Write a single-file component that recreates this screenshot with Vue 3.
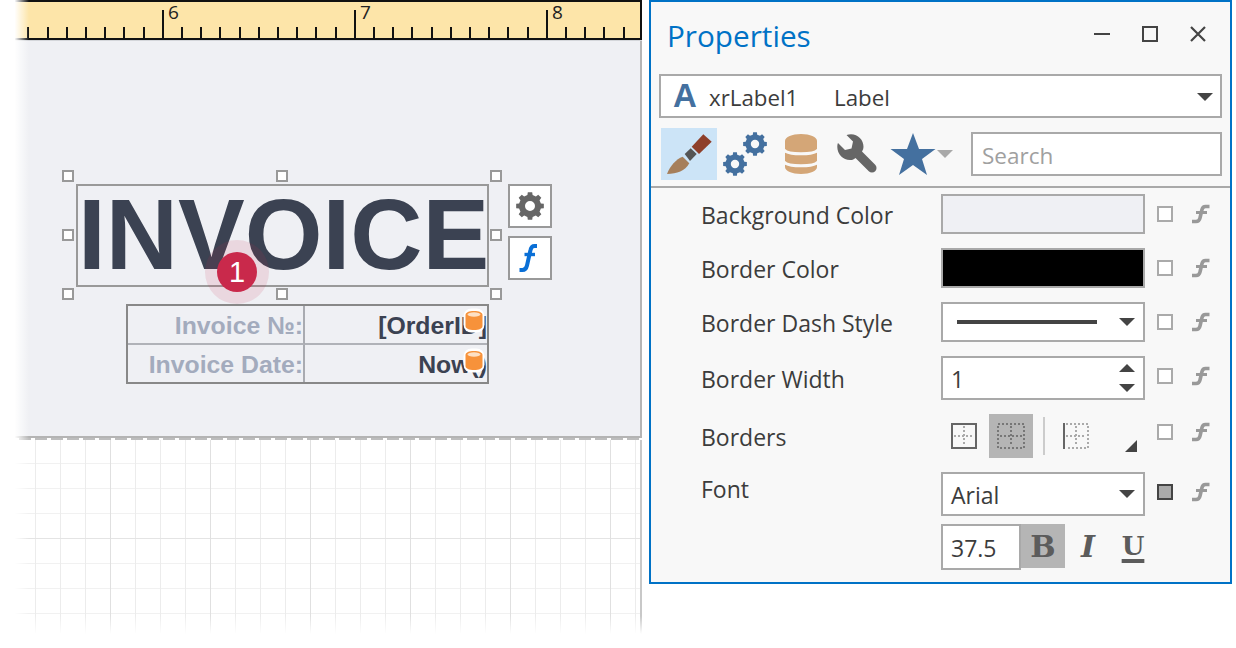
<script setup>
// toothed wheel as a path, hole cut with evenodd
function gear(cx, cy, r, hole, teeth = 8) {
  const step = (Math.PI * 2) / teeth
  const ri = r * 0.8
  const pts = []
  const at = (a, rad) => `${(cx + Math.cos(a) * rad).toFixed(2)} ${(cy + Math.sin(a) * rad).toFixed(2)}`
  for (let i = 0; i < teeth; i++) {
    const a = i * step - Math.PI / 2
    pts.push(at(a - step * 0.3, ri), at(a - step * 0.2, r), at(a + step * 0.2, r), at(a + step * 0.3, ri))
  }
  const circle = `M${cx - hole} ${cy}a${hole} ${hole} 0 1 0 ${hole * 2} 0a${hole} ${hole} 0 1 0 ${-hole * 2} 0Z`
  return `M${pts.join('L')}Z${circle}`
}

const bigGear = gear(14, 14, 14, 5)
const gearA = gear(32, 12, 12, 4.2)
const gearB = gear(12, 32, 12, 4.2)

const ticks = []
for (let i = 0; i * 19.2 + 28.4 < 640; i++) {
  const x = Math.round(28.4 + i * 19.2)
  ticks.push({ x, major: (i - 7) % 10 === 0 })
}
const rulerNums = [
  { n: 6, x: 168 },
  { n: 7, x: 360 },
  { n: 8, x: 552 },
]

const handles = [
  { x: 68, y: 176 }, { x: 282, y: 176 }, { x: 496, y: 176 },
  { x: 68, y: 235 }, { x: 496, y: 235 },
  { x: 68, y: 294 }, { x: 282, y: 294 }, { x: 496, y: 294 },
]

const rows = [
  { label: 'Background Color', kind: 'swatch', color: '#eff0f4' },
  { label: 'Border Color', kind: 'swatch', color: '#000' },
  { label: 'Border Dash Style', kind: 'dash' },
  { label: 'Border Width', kind: 'num' },
  { label: 'Borders', kind: 'borders' },
  { label: 'Font', kind: 'font' },
]
</script>

<template>
  <div class="page">
    <div class="designer">
      <div class="ruler">
        <svg width="642" height="40" class="ruler-svg">
          <rect
            v-for="t in ticks"
            :key="t.x"
            :x="t.x - 1"
            :y="t.major ? 10 : 27"
            width="2"
            :height="t.major ? 28 : 11"
            fill="#111"
          />
          <text v-for="r in rulerNums" :key="r.n" :x="r.x" y="19" class="ruler-num">{{ r.n }}</text>
        </svg>
      </div>

      <div class="surface">
        <div class="label-box">INVOICE</div>
        <div v-for="(h, i) in handles" :key="i" class="handle" :style="{ left: h.x - 6 + 'px', top: h.y - 46 + 'px' }"></div>

        <div class="side-btn gear-btn">
          <svg width="28" height="28" viewBox="0 0 28 28"><path :d="bigGear" fill="#666" fill-rule="evenodd" /></svg>
        </div>
        <div class="side-btn f-btn">
          <svg width="20" height="30" viewBox="0 0 20 30">
            <path d="M18 3H15.500C13 3 12 4.500 11.500 7L8 22.500C7.300 25.500 6 27 3.500 27H0.500" fill="none" stroke="#0a6fd6" stroke-width="4" />
            <path d="M5.500 11.500H16" fill="none" stroke="#0a6fd6" stroke-width="3.400" />
          </svg>
        </div>

        <div class="info-table">
          <div class="cell key">Invoice №:</div>
          <div class="cell val">[OrderID]</div>
          <div class="cell key">Invoice Date:</div>
          <div class="cell val">Now()</div>
          <svg v-for="t in [2, 42]" :key="t" class="pill" :style="{ top: t + 'px' }" width="22" height="25" viewBox="0 0 22 25">
            <rect x="0.500" y="0.500" width="21" height="24" rx="8" fill="#fff" />
            <path d="M2.500 7C2.500 4.500 6 3 11 3S19.500 4.500 19.500 7V18C19.500 20.500 16 22 11 22S2.500 20.500 2.500 18Z" fill="#f7923a" />
            <ellipse cx="11" cy="6.500" rx="6.500" ry="2.200" fill="#fde0c4" />
          </svg>
        </div>

        <div class="halo"></div>
        <div class="badge">1</div>
      </div>

      <div class="page-edge"></div>
      <div class="grid-area"></div>

      <div class="fade-left"></div>
      <div class="fade-bottom"></div>
    </div>

    <section class="panel">
      <header class="titlebar">
        <h1 class="title">Properties</h1>
        <div class="win-btns">
          <svg width="16" height="16" viewBox="0 0 16 16"><path d="M0 8H16" stroke="#444" stroke-width="2" /></svg>
          <svg width="16" height="16" viewBox="0 0 16 16"><rect x="1" y="1" width="14" height="14" fill="none" stroke="#444" stroke-width="2" /></svg>
          <svg width="16" height="16" viewBox="0 0 16 16"><path d="M1 1L15 15M15 1L1 15" stroke="#444" stroke-width="2.200" /></svg>
        </div>
      </header>

      <div class="combo">
        <span class="combo-a">A</span>
        <span class="combo-name">xrLabel1</span>
        <span class="combo-type">Label</span>
        <span class="arrow combo-arrow"></span>
      </div>

      <div class="tools">
        <div class="tool brush">
          <svg width="56" height="52" viewBox="0 0 56 52">
            <path d="M42.300 6.300L50.700 13.700L38 26L30.700 18.700Z" fill="#8e3f2a" />
            <path d="M29.700 20.300L35.700 26L29 33L23.700 26Z" fill="#555" />
            <path d="M21.700 28.700L28.300 35.300C24 43 16 46 6 46C9 38 15 31 21.700 28.700Z" fill="#a67f5b" />
          </svg>
        </div>
        <svg class="tool-gears" width="44" height="44" viewBox="0 0 44 44">
          <path :d="gearA" fill="#44709f" fill-rule="evenodd" />
          <path :d="gearB" fill="#44709f" fill-rule="evenodd" />
        </svg>
        <svg class="tool-db" width="32" height="40" viewBox="0 0 32 40">
          <path d="M0 7C0 3 7 0 16 0S32 3 32 7V33C32 37 25 40 16 40S0 37 0 33Z" fill="#d4a677" />
          <path d="M-1 16C3 21 29 21 33 16M-1 28C3 33 29 33 33 28" fill="none" stroke="#f8f8f8" stroke-width="3" />
        </svg>
        <svg class="tool-wrench" width="40" height="40" viewBox="0 0 40 40">
          <path d="M14 .3C21 .3 26.500 6 26.500 13C26.500 14.500 26 16 25 17.600L38.200 30.800A4.500 4.500 0 0 1 31.800 37.200L18.500 23.900C16.500 25.500 15 26 13 26C6 26 .3 20 .3 13C.3 11.500 .5 10 1 9L8 16L14.500 14.500L16 7.500L9.500 1C11 .5 12.500 .3 14 .3Z" fill="#666" />
        </svg>
        <svg class="tool-star" width="46" height="44" viewBox="0 0 46 44">
          <polygon points="23,1 29,17 45.500,17 32,27 37,43 23,33 9,43 14,27 .5,17 17,17" fill="#44709f" />
        </svg>
        <span class="arrow star-arrow"></span>
        <div class="search">Search</div>
      </div>

      <div class="sep"></div>

      <div class="rows">
        <div v-for="r in rows" :key="r.label" class="row" :class="r.kind">
          <div class="row-label">{{ r.label }}</div>

          <div v-if="r.kind === 'swatch'" class="editor" :style="{ background: r.color }"></div>

          <div v-else-if="r.kind === 'dash'" class="editor dash-ed">
            <span class="dash-line"></span>
            <span class="arrow"></span>
          </div>

          <div v-else-if="r.kind === 'num'" class="editor num-ed">
            <span class="ed-text">1</span>
            <span class="spin">
              <span class="arrow up"></span>
              <span class="arrow"></span>
            </span>
          </div>

          <div v-else-if="r.kind === 'borders'" class="border-tools">
            <svg width="26" height="26" viewBox="0 0 26 26" class="b-one">
              <rect x="1" y="1" width="24" height="24" fill="none" stroke="#666" stroke-width="2" />
              <path d="M13 3V23M3 13H23" stroke="#aaa" stroke-width="2" stroke-dasharray="2 2" />
            </svg>
            <div class="b-sel">
              <svg width="28" height="26" viewBox="0 0 28 26">
                <rect x="1" y="1" width="26" height="24" fill="none" stroke="#777" stroke-width="2" stroke-dasharray="2 2" />
                <path d="M14 3V23M3 13H25" stroke="#777" stroke-width="2" stroke-dasharray="2 2" />
              </svg>
            </div>
            <span class="b-div"></span>
            <svg width="26" height="26" viewBox="0 0 26 26" class="b-three">
              <path d="M1 0V26" stroke="#666" stroke-width="2" />
              <path d="M3 1H25V25H3M13 3V23M3 13H23" fill="none" stroke="#aaa" stroke-width="2" stroke-dasharray="2 2" />
            </svg>
            <svg width="12" height="12" viewBox="0 0 12 12" class="b-corner"><polygon points="12,0 12,12 0,12" fill="#444" /></svg>
          </div>

          <div v-else class="editor font-ed">
            <span class="ed-text">Arial</span>
            <span class="arrow"></span>
          </div>

          <div class="check" :class="{ dark: r.kind === 'font' }"></div>
          <svg class="fx" width="18" height="20" viewBox="0 0 18 20">
            <path d="M17.500 2.500H13.500C11.500 2.500 10.500 3.500 10 5.500L8 14C7.500 16.500 6.500 17.500 4 17.500H0" fill="none" stroke="#999" stroke-width="3.600" />
            <path d="M4 8.500H15" fill="none" stroke="#999" stroke-width="3" />
          </svg>
        </div>

        <div class="size-row">
          <div class="size-input">37.5</div>
          <div class="style-btn on">B</div>
          <div class="style-btn ital">I</div>
          <div class="style-btn under">U</div>
        </div>
      </div>
    </section>
  </div>
</template>

<style scoped>
.page {
  width: 1236px;
  height: 648px;
  display: flex;
  gap: 7px;
  overflow: hidden;
  background: #fff;
  font-family: "Open Sans", "Liberation Sans", sans-serif;
}

/* left: report designer */
.designer {
  position: relative;
  width: 642px;
  height: 648px;
  flex: none;
  display: flex;
  flex-direction: column;
}
.ruler {
  height: 40px;
  flex: none;
  box-sizing: border-box;
  background: #fde5a9;
  border-top: 2px solid #111;
  border-bottom: 2px solid #111;
  border-right: 2px solid #111;
  position: relative;
  z-index: 1;
  box-shadow: 0 1px 0 #d4d6da;
}
.ruler-svg {
  position: absolute;
  left: 0;
  top: -2px;
}
.ruler-num {
  font-family: "Open Sans", sans-serif;
  font-size: 19px;
  fill: #222;
}
.surface {
  position: relative;
  height: 396px;
  flex: none;
  box-sizing: border-box;
  background: #eff0f4;
  border-right: 2px solid #b5b5b5;
}
.label-box {
  position: absolute;
  left: 76px;
  top: 144px;
  width: 413px;
  height: 103px;
  box-sizing: border-box;
  border: 2px solid #999;
  font: bold 100px/97px "Liberation Sans", Arial, sans-serif;
  font-kerning: none;
  color: #3b4252;
  white-space: nowrap;
}
.handle {
  position: absolute;
  width: 12px;
  height: 12px;
  box-sizing: border-box;
  border: 2px solid #999;
  background: #fff;
}
.side-btn {
  position: absolute;
  left: 508px;
  width: 44px;
  height: 44px;
  box-sizing: border-box;
  border: 2px solid #999;
  background: #fff;
  display: flex;
  align-items: center;
  justify-content: center;
}
.gear-btn {
  top: 144px;
}
.f-btn {
  top: 196px;
  padding-right: 3px;
}
.info-table {
  position: absolute;
  left: 126px;
  top: 264px;
  width: 363px;
  height: 80px;
  box-sizing: border-box;
  border: 2px solid #888;
  display: grid;
  grid-template-columns: 177px 1fr;
  grid-template-rows: 39px 1fr;
  font: bold 24.800px "Liberation Sans", Arial, sans-serif;
}
.cell {
  display: flex;
  align-items: center;
  justify-content: flex-end;
  padding: 2px 0 0;
  white-space: nowrap;
  border-bottom: 2px solid #b0b2b8;
  box-sizing: border-box;
}
.cell:nth-child(n + 3) {
  border-bottom: 0;
}
.key {
  color: #a3abbd;
  border-right: 2px solid #a9abb1;
}
.val {
  color: #3b4252;
}
.pill {
  position: absolute;
  left: 335px;
}
.halo {
  position: absolute;
  left: 205px;
  top: 200px;
  width: 64px;
  height: 64px;
  border-radius: 50%;
  background: rgba(201, 41, 75, 0.12);
}
.badge {
  position: absolute;
  left: 217px;
  top: 212px;
  width: 40px;
  height: 40px;
  border-radius: 50%;
  background: #c9294b;
  color: #fff;
  font: 29px/40px "Liberation Sans", Arial, sans-serif;
  text-align: center;
}
.page-edge {
  height: 4px;
  flex: none;
  box-sizing: border-box;
  border-top: 2px solid #b4b4b4;
  background: linear-gradient(to right, #bdbdbd 12px, transparent 12px) 3px 0 / 16px 100% repeat-x;
}
.grid-area {
  flex: 1;
  box-sizing: border-box;
  border-right: 2px solid #c8c8c8;
  background-image:
    linear-gradient(to right, #e0e0e0 1px, transparent 1px),
    linear-gradient(to bottom, #e4e4e4 1px, transparent 1px),
    linear-gradient(to right, #ececec 1px, transparent 1px),
    linear-gradient(to bottom, #f1f1f1 1px, transparent 1px);
  background-size: 100px 100%, 100% 100px, 25px 100%, 100% 25px;
  background-position: 10px 0, 0 98px, 10px 0, 0 23px;
}
.fade-left {
  position: absolute;
  left: 0;
  top: 0;
  bottom: 0;
  width: 29px;
  z-index: 2;
  background: linear-gradient(to right, #fff 50%, rgba(255, 255, 255, 0) 100%);
}
.fade-bottom {
  position: absolute;
  left: 0;
  right: 0;
  bottom: 0;
  height: 32px;
  background: linear-gradient(to bottom, rgba(255, 255, 255, 0) 0, #fff 56%);
}

/* right: properties panel */
.panel {
  width: 583px;
  height: 584px;
  flex: none;
  box-sizing: border-box;
  border: 2px solid #0072c6;
  background: #f8f8f8;
  color: #3c3c3c;
  font-size: 23px;
}
.titlebar {
  height: 72px;
  display: flex;
  align-items: flex-start;
  justify-content: space-between;
  padding: 0 24px 0 16px;
}
.title {
  margin: 13px 0 0;
  font-size: 29.700px;
  line-height: 42px;
  font-weight: 400;
  color: #0072c6;
}
.win-btns {
  display: flex;
  gap: 32px;
  padding-top: 24px;
}
.combo {
  height: 44px;
  margin: 0 8px;
  box-sizing: border-box;
  border: 2px solid #a9a9a9;
  background: #fff;
  display: flex;
  align-items: center;
  position: relative;
  font-size: 22.300px;
}
.combo-a {
  margin-left: 12px;
  width: 36px;
  font: bold 33px "Liberation Sans", sans-serif;
  color: #44709f;
}
.combo-name {
  width: 125px;
  padding-top: 2px;
}
.combo-type {
  padding-top: 2px;
}
.arrow {
  display: inline-block;
  width: 0;
  height: 0;
  border-left: 8px solid transparent;
  border-right: 8px solid transparent;
  border-top: 8px solid #444;
}
.arrow.up {
  border-top: 0;
  border-bottom: 8px solid #444;
}
.combo-arrow {
  position: absolute;
  right: 7px;
  top: 17px;
}
.tools {
  height: 52px;
  margin-top: 10px;
  display: flex;
  padding-left: 10px;
  position: relative;
}
.tool {
  flex: none;
}
.brush {
  width: 56px;
  height: 52px;
  background: #cce4f7;
}
.tool-gears {
  margin: 4px 0 0 6px;
}
.tool-db {
  margin: 6px 0 0 18px;
}
.tool-wrench {
  margin: 6px 0 0 20px;
}
.tool-star {
  margin: 4px 0 0 13px;
}
.star-arrow {
  border-top-color: #a9a9a9;
  margin: 22px 0 0 1px;
}
.search {
  position: absolute;
  left: 320px;
  top: 4px;
  width: 251px;
  height: 44px;
  box-sizing: border-box;
  border: 2px solid #a9a9a9;
  background: #fff;
  color: #a0a0a0;
  padding-left: 9px;
  line-height: 44px;
  font-size: 22.500px;
}
.sep {
  height: 2px;
  margin-top: 6px;
  background: #a9a9a9;
}
.rows {
  display: flex;
  flex-direction: column;
  gap: 14px;
  padding: 6px 0 0 51px;
}
.row {
  display: grid;
  grid-template-columns: 239px 204px 28px 37px;
  height: 40px;
  align-items: center;
}
.row.num,
.row.borders,
.row.font {
  height: 44px;
}
.row-label {
  padding-top: 2px;
  margin-left: -1px;
}
.row.font .row-label {
  padding: 0 0 10px;
}
.editor {
  height: 100%;
  box-sizing: border-box;
  border: 2px solid #a9a9a9;
  background: #fff;
  display: flex;
  align-items: center;
  justify-content: space-between;
}
.dash-ed {
  padding: 0 8px 0 14px;
}
.dash-line {
  width: 140px;
  height: 4px;
  background: #444;
}
.num-ed,
.font-ed {
  padding: 0 8px 0 8px;
}
.ed-text {
  padding-top: 2px;
}
.spin {
  display: flex;
  flex-direction: column;
  gap: 12px;
}
.check {
  justify-self: end;
  width: 16px;
  height: 16px;
  box-sizing: border-box;
  border: 2px solid #aaa;
  background: #fff;
}
.check.dark {
  border-color: #444;
  background: #aaa;
  margin-bottom: 4px;
}
.row.num .check,
.row.num .fx {
  margin-bottom: 4px;
}
.row.borders .check,
.row.borders .fx {
  margin-bottom: 8px;
}
.row.font .fx {
  margin-bottom: 4px;
}
.fx {
  justify-self: end;
}
.border-tools {
  display: flex;
  align-items: center;
  height: 44px;
  position: relative;
}
.b-one {
  margin-left: 10px;
}
.b-sel {
  margin-left: 12px;
  width: 44px;
  height: 44px;
  background: #b5b5b5;
  display: flex;
  align-items: center;
  justify-content: center;
}
.b-div {
  width: 2px;
  height: 38px;
  margin-left: 10px;
  background: #ccc;
}
.b-three {
  margin-left: 18px;
}
.b-corner {
  position: absolute;
  left: 184px;
  top: 26px;
}
.size-row {
  display: flex;
  margin: -6px 0 0 239px;
  align-items: flex-start;
}
.size-input {
  width: 80px;
  height: 46px;
  box-sizing: border-box;
  border: 2px solid #a9a9a9;
  background: #fff;
  padding-left: 8px;
  line-height: 44px;
}
.style-btn {
  width: 44px;
  height: 44px;
  text-align: center;
  font: bold 30px/46px "DejaVu Serif", serif;
  color: #5c5c5c;
}
.style-btn.on {
  background: #b5b5b5;
}
.ital {
  font-style: italic;
  margin-left: 1px;
}
.under {
  margin-left: 1px;
  font-size: 26px;
  line-height: 44px;
  text-decoration: underline;
  text-decoration-thickness: 4px;
  text-underline-offset: 4px;
}
</style>

<style>
html,
body {
  margin: 0;
  overflow: hidden;
  background: #fff;
}
</style>
